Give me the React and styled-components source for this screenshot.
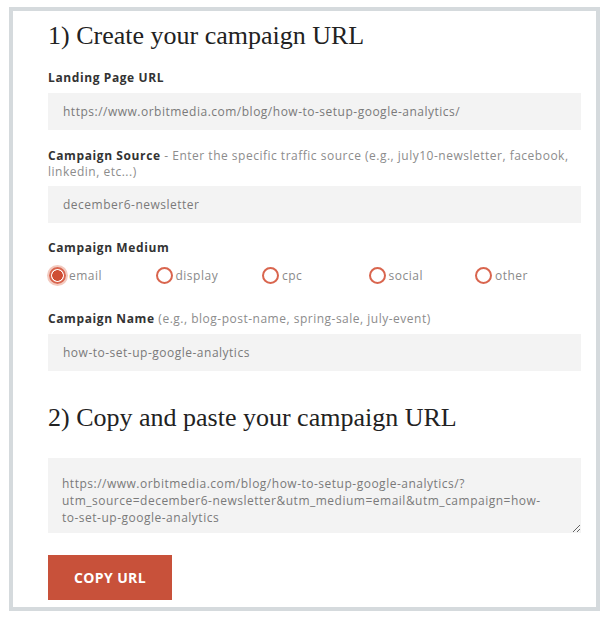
import React, { useState } from 'react';
import styled, { createGlobalStyle } from 'styled-components';

const GlobalStyle = createGlobalStyle`
  body {
    margin: 0;
    background: #fff;
    font-family: "Open Sans", "Liberation Sans", sans-serif;
  }
`;

const Card = styled.main`
  box-sizing: border-box;
  width: 591px;
  height: 604px;
  margin: 7px 0 0 9px;
  border: 4px solid #d5dadd;
  padding: 10px 15px 0 35px;
  display: flex;
  flex-direction: column;
`;

const Heading = styled.h2`
  margin: ${props => props.$top || 0}px 0 0;
  font-family: "Liberation Serif", serif;
  font-weight: 400;
  font-size: 26px;
  line-height: 30px;
  color: #222;
`;

const Label = styled.label`
  display: block;
  margin-top: ${props => props.$top}px;
  font-size: 12px;
  line-height: 16px;
  font-weight: 700;
  letter-spacing: 0.6px;
  color: #333;
`;

const Hint = styled.span`
  font-weight: 400;
  letter-spacing: 0.5px;
  color: #8c8c8c;
`;

const TextInput = styled.input`
  box-sizing: border-box;
  display: block;
  width: 100%;
  height: 37px;
  margin-top: ${props => props.$top || 7}px;
  padding: 0 15px;
  border: none;
  outline: none;
  background: #f3f3f3;
  font-family: inherit;
  font-size: 12px;
  letter-spacing: 0.5px;
  color: #7a7a7a;
`;

const RadioRow = styled.div`
  display: grid;
  grid-template-columns: repeat(5, 106.5px);
  align-items: center;
  height: 20px;
  margin: 9px 0 0 1px;
`;

const Option = styled.label`
  display: flex;
  align-items: center;
  gap: 3px;
  font-size: 12px;
  letter-spacing: 0.5px;
  color: #8a8a8a;
  cursor: pointer;
`;

const Radio = styled.input`
  appearance: none;
  box-sizing: border-box;
  width: 17px;
  height: 17px;
  margin: 0;
  border: 2px solid #d9654e;
  border-radius: 50%;
  background: #fff;

  &:checked {
    background: radial-gradient(circle, #cf4e34 0 5px, #fff 5.6px);
    box-shadow: 0 0 0 2px #f3cabf;
  }
`;

const Output = styled.textarea`
  box-sizing: border-box;
  display: block;
  width: 100%;
  height: 75px;
  margin-top: 25px;
  padding: 17px 32px 0 14px;
  border: none;
  outline: none;
  resize: vertical;
  background: #f3f3f3;
  font-family: inherit;
  font-size: 12px;
  line-height: 17px;
  letter-spacing: 0.5px;
  color: #7a7a7a;
`;

const CopyButton = styled.button`
  width: 124px;
  height: 45px;
  margin-top: 22px;
  border: none;
  background: #c8513a;
  color: #fff;
  font-family: inherit;
  font-size: 14px;
  font-weight: 700;
  letter-spacing: 0.4px;
  cursor: pointer;
`;

const mediums = ['email', 'display', 'cpc', 'social', 'other'];

function App() {
  const [medium, setMedium] = useState('email');
  const url = 'https://www.orbitmedia.com/blog/how-to-setup-google-analytics/';
  const source = 'december6-newsletter';
  const name = 'how-to-set-up-google-analytics';
  const full = `${url}?utm_source=${source}&utm_medium=${medium}&utm_campaign=${name}`;

  return (
    <>
      <GlobalStyle />
      <Card>
        <Heading>1) Create your campaign URL</Heading>

        <Label $top={19}>Landing Page URL</Label>
        <TextInput readOnly value={url} />

        <Label $top={18}>
          Campaign Source <Hint>- Enter the specific traffic source (e.g., july10-newsletter, facebook, linkedin, etc...)</Hint>
        </Label>
        <TextInput $top={6} readOnly value={source} />

        <Label $top={17}>Campaign Medium</Label>
        <RadioRow>
          {mediums.map(m => (
            <Option key={m}>
              <Radio
                type="radio"
                name="medium"
                checked={medium === m}
                onChange={() => setMedium(m)}
              />
              {m}
            </Option>
          ))}
        </RadioRow>

        <Label $top={26}>
          Campaign Name <Hint>(e.g., blog-post-name, spring-sale, july-event)</Hint>
        </Label>
        <TextInput readOnly value={name} />

        <Heading $top={32}>2) Copy and paste your campaign URL</Heading>
        <Output readOnly value={full} />

        <CopyButton>COPY URL</CopyButton>
      </Card>
    </>
  );
}

export default App;
